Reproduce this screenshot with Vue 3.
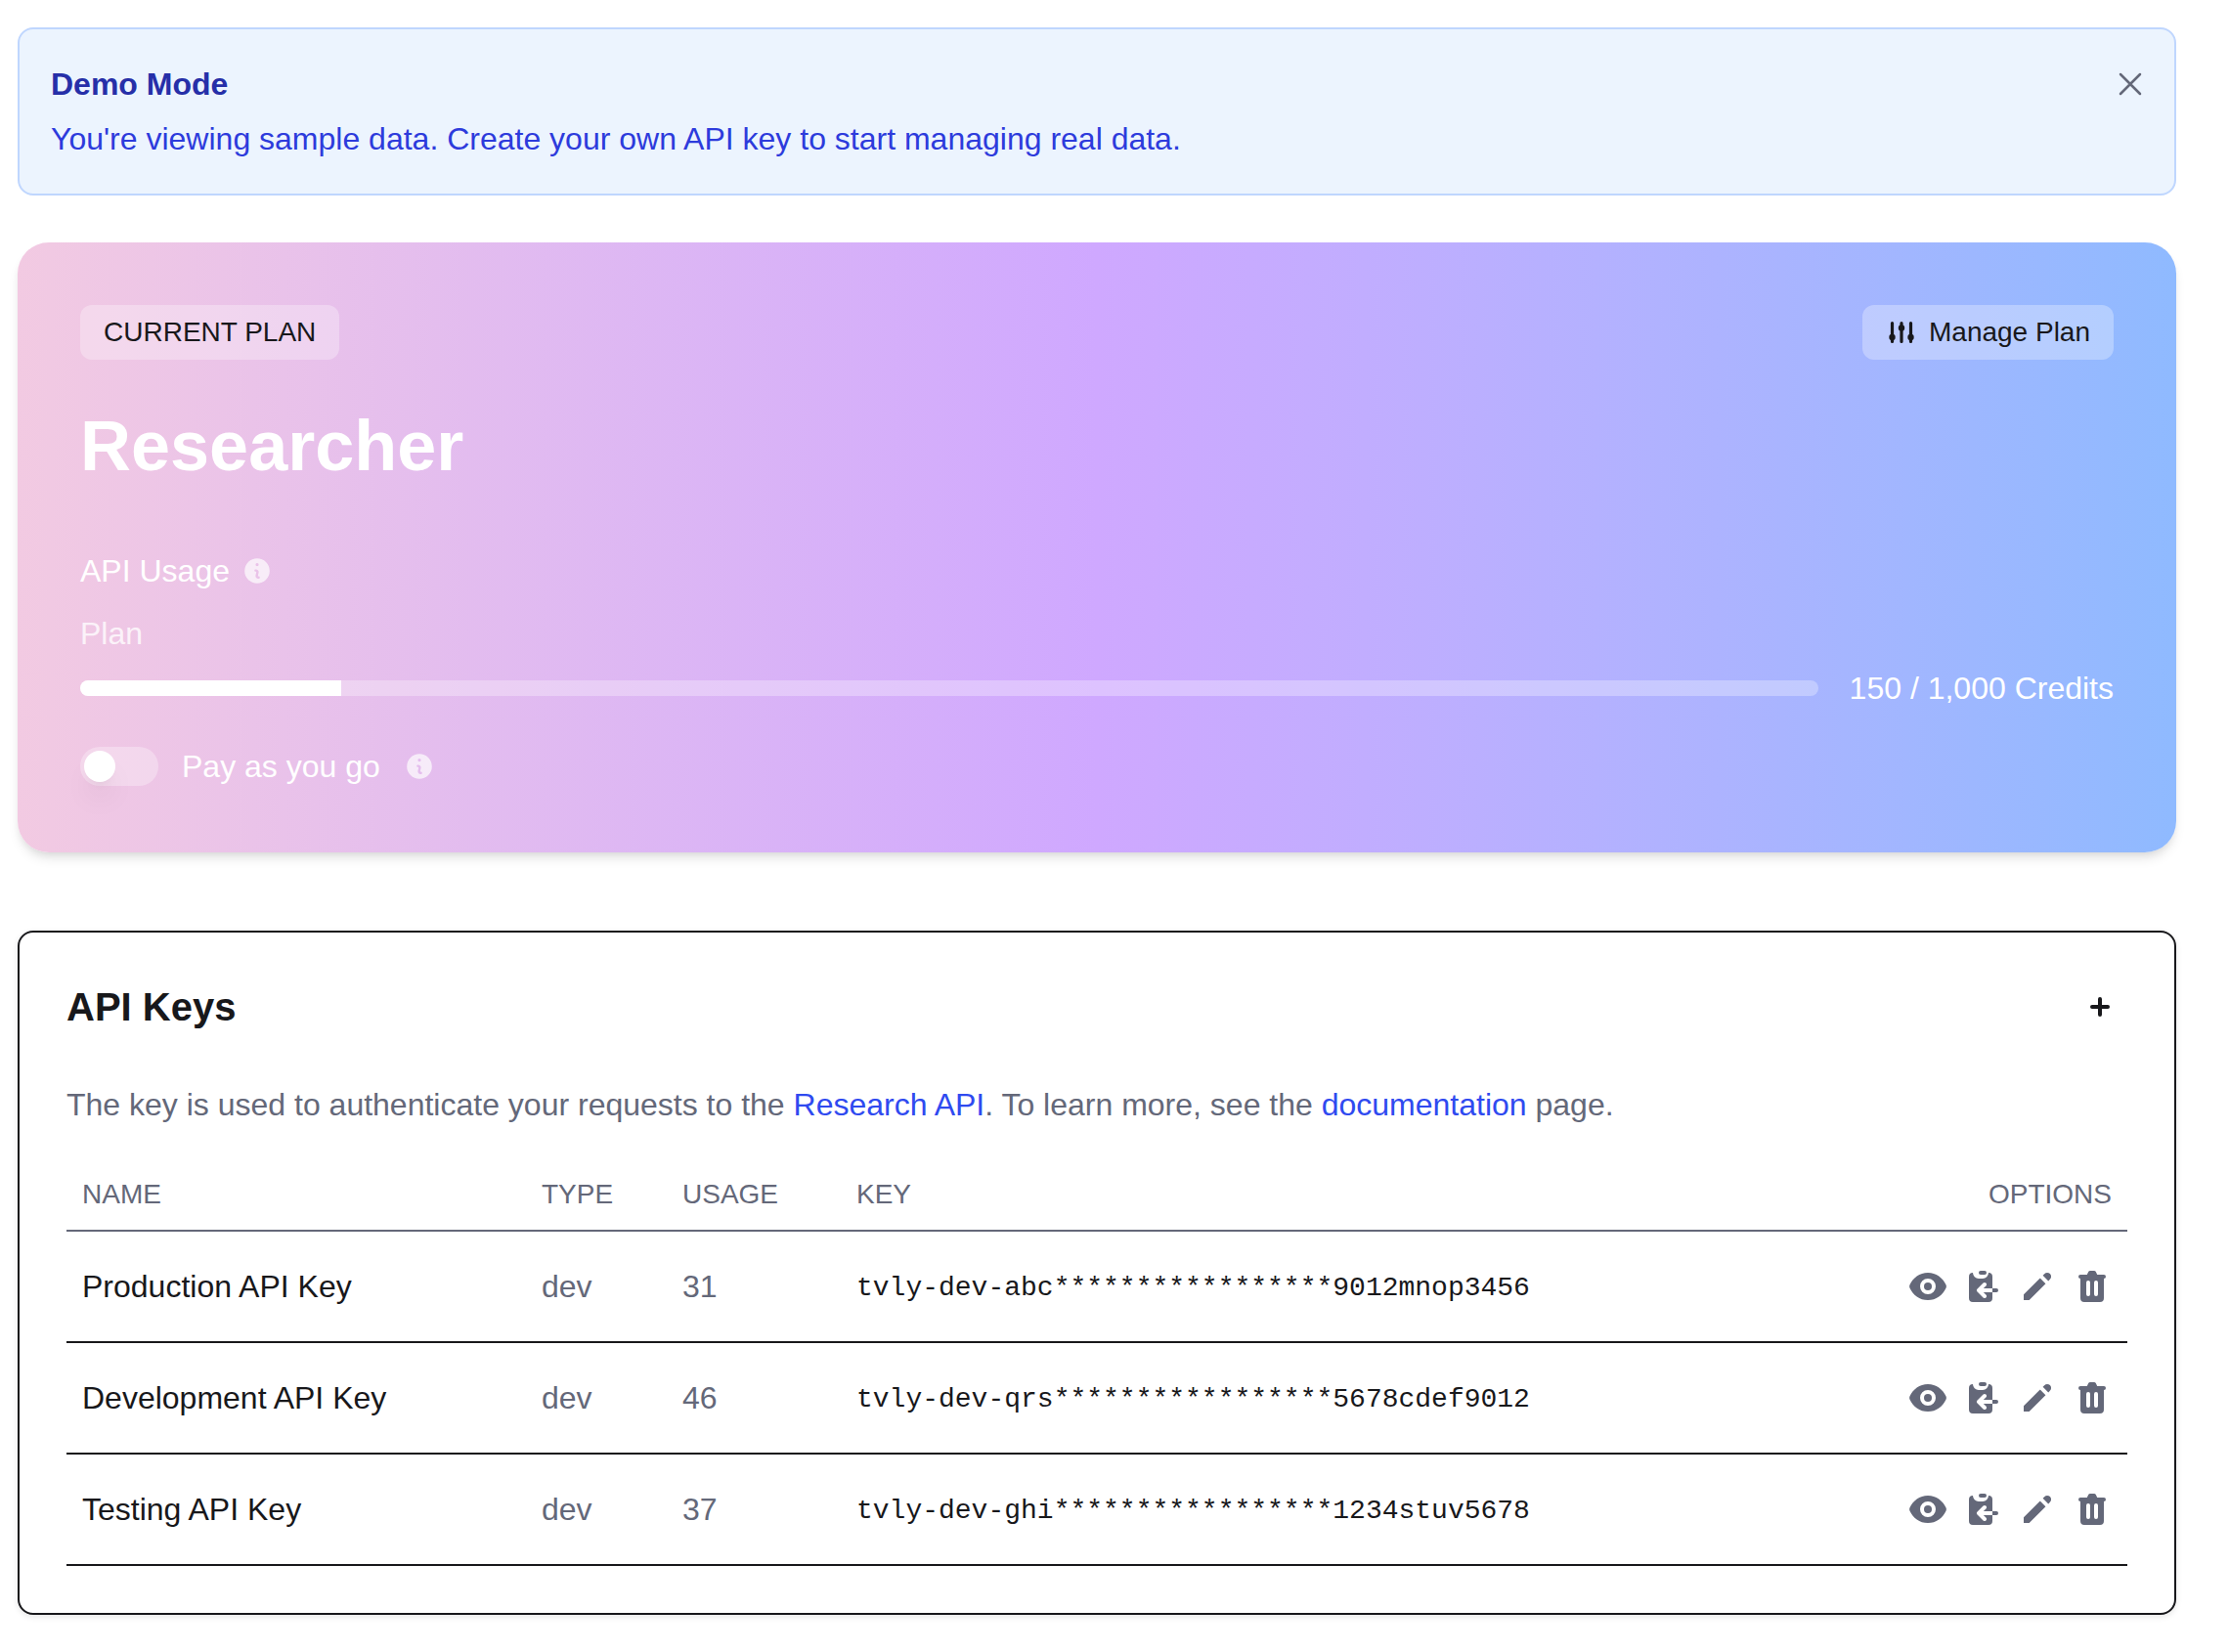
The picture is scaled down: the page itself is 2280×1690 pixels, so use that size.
<script setup>
import { ref } from 'vue'

const used = 150
const limit = 1000
const payAsYouGo = ref(false)

const keys = [
  { name: 'Production API Key', type: 'dev', usage: 31, key: 'tvly-dev-abc*****************9012mnop3456' },
  { name: 'Development API Key', type: 'dev', usage: 46, key: 'tvly-dev-qrs*****************5678cdef9012' },
  { name: 'Testing API Key', type: 'dev', usage: 37, key: 'tvly-dev-ghi*****************1234stuv5678' },
]

const infoPath =
  'M18 10a8 8 0 1 1-16 0 8 8 0 0 1 16 0Zm-7-4a1 1 0 1 1-2 0 1 1 0 0 1 2 0ZM9 9a.75.75 0 0 0 0 1.5h.253a.25.25 0 0 1 .244.304l-.459 2.066A1.75 1.75 0 0 0 10.747 15H11a.75.75 0 0 0 0-1.5h-.253a.25.25 0 0 1-.244-.304l.459-2.066A1.75 1.75 0 0 0 9.253 9H9Z'

const actions = [
  {
    label: 'Show key',
    paths: [
      'M10 3C5.8 3 2.3 5.7.7 9.3a1.7 1.7 0 0 0 0 1.4C2.3 14.3 5.8 17 10 17s7.7-2.7 9.3-6.3a1.7 1.7 0 0 0 0-1.4C17.7 5.7 14.2 3 10 3Zm0 11a4 4 0 1 1 0-8 4 4 0 0 1 0 8Z',
      'M12 10a2 2 0 1 1-4 0 2 2 0 0 1 4 0Z',
    ],
  },
  {
    label: 'Copy key',
    paths: [
      'M9 2h2a1 1 0 0 1 0 2H9a1 1 0 0 1 0-2Z',
      'M5 3A2 2 0 0 0 3 5v11a2 2 0 0 0 2 2h8a2 2 0 0 0 2-2v-3h-4.586l1.293 1.293a1 1 0 0 1-1.414 1.414l-3-3a1 1 0 0 1 0-1.414l3-3a1 1 0 0 1 1.414 1.414L10.414 11H15V5a2 2 0 0 0-2-2 3 3 0 0 1-3 3H8a3 3 0 0 1-3-3Z',
      'M15 11h2a1 1 0 1 1 0 2h-2v-2Z',
    ],
  },
  {
    label: 'Edit key',
    paths: ['M13.586 3.586a2 2 0 1 1 2.828 2.828l-.793.793-2.828-2.828.793-.793ZM11.379 5.793 3 14.172V17h2.828l8.38-8.379-2.83-2.828Z'],
  },
  {
    label: 'Delete key',
    paths: [
      'M9 2a1 1 0 0 0-.894.553L7.382 4H4a1 1 0 0 0 0 2v10a2 2 0 0 0 2 2h8a2 2 0 0 0 2-2V6a1 1 0 1 0 0-2h-3.382l-.724-1.447A1 1 0 0 0 11 2H9ZM7 8a1 1 0 0 1 2 0v6a1 1 0 1 1-2 0V8Zm5-1a1 1 0 0 0-1 1v6a1 1 0 1 0 2 0V8a1 1 0 0 0-1-1Z',
    ],
  },
]
</script>

<template>
  <main class="page">
    <section class="banner">
      <div class="banner-text">
        <h2>Demo Mode</h2>
        <p>You're viewing sample data. Create your own API key to start managing real data.</p>
      </div>
      <button class="close" type="button" aria-label="Dismiss">
        <svg class="icon" viewBox="0 0 24 24" fill="none" stroke="currentColor" stroke-width="1.5" stroke-linecap="round">
          <path d="M6 6l12 12M18 6L6 18" />
        </svg>
      </button>
    </section>

    <section class="plan">
      <div class="plan-top">
        <span class="badge">CURRENT PLAN</span>
        <button class="badge manage" type="button">
          <svg class="icon-small" viewBox="0 0 32 32" stroke="currentColor" fill="currentColor" stroke-width="3.2" stroke-linecap="round">
            <path d="M6.500 6.500v19M16 6.500v19M25.500 6.500v19" />
            <g stroke="none">
              <circle cx="6.500" cy="21" r="3.200" />
              <circle cx="16" cy="11.500" r="3.200" />
              <circle cx="25.500" cy="21" r="3.200" />
            </g>
          </svg>
          Manage Plan
        </button>
      </div>
      <h1>Researcher</h1>
      <div class="usage-title">
        <span>API Usage</span>
        <svg class="icon-small info" viewBox="0 0 20 20" fill="currentColor" fill-rule="evenodd"><path :d="infoPath" /></svg>
      </div>
      <p class="plan-label">Plan</p>
      <div class="meter-row">
        <div class="meter" role="progressbar" aria-label="Plan credits" :aria-valuenow="used" :aria-valuemax="limit">
          <div class="meter-fill" :style="{ width: (used / limit) * 100 + '%' }"></div>
        </div>
        <span>150 / 1,000 Credits</span>
      </div>
      <div class="payg">
        <input id="payg" v-model="payAsYouGo" class="switch" type="checkbox" role="switch" />
        <label for="payg">Pay as you go</label>
        <svg class="icon-small info" viewBox="0 0 20 20" fill="currentColor" fill-rule="evenodd"><path :d="infoPath" /></svg>
      </div>
    </section>

    <section class="keys">
      <header class="keys-head">
        <h2>API Keys</h2>
        <button class="add" type="button" aria-label="Add key">
          <svg class="icon" viewBox="0 0 20 20" fill="currentColor">
            <path d="M10 5a1 1 0 0 1 1 1v3h3a1 1 0 1 1 0 2h-3v3a1 1 0 1 1-2 0v-3H6a1 1 0 1 1 0-2h3V6a1 1 0 0 1 1-1Z" />
          </svg>
        </button>
      </header>
      <p class="intro">
        The key is used to authenticate your requests to the <a href="#research">Research API</a>. To learn more, see the
        <a href="#docs">documentation</a> page.
      </p>
      <table>
        <colgroup>
          <col class="col-name" />
          <col class="col-type" />
          <col class="col-usage" />
          <col />
          <col class="col-options" />
        </colgroup>
        <thead>
          <tr>
            <th scope="col">NAME</th>
            <th scope="col">TYPE</th>
            <th scope="col">USAGE</th>
            <th scope="col">KEY</th>
            <th scope="col" class="right">OPTIONS</th>
          </tr>
        </thead>
        <tbody>
          <tr v-for="row in keys" :key="row.name">
            <td>{{ row.name }}</td>
            <td class="muted">{{ row.type }}</td>
            <td class="muted">{{ row.usage }}</td>
            <td class="mono">{{ row.key }}</td>
            <td>
              <div class="options">
                <button v-for="action in actions" :key="action.label" type="button" :aria-label="action.label">
                  <svg class="icon" viewBox="0 0 20 20" fill="currentColor" fill-rule="evenodd">
                    <path v-for="d in action.paths" :key="d" :d="d" />
                  </svg>
                </button>
              </div>
            </td>
          </tr>
        </tbody>
      </table>
    </section>
  </main>
</template>

<style>
body {
  background: #fff;
}
</style>

<style scoped>
.page {
  display: flex;
  flex-direction: column;
  padding: 28px 54px 36px 18px;
  font-family: "Liberation Sans", Arial, sans-serif;
  font-size: 32px;
  line-height: 48px;
  color: #18181b;
}

h1,
h2,
p {
  margin: 0;
}

button {
  display: flex;
  align-items: center;
  justify-content: center;
  margin: 0;
  padding: 0;
  border: 0;
  background: none;
  color: inherit;
  font: inherit;
  cursor: pointer;
}

.icon {
  display: block;
  width: 40px;
  height: 40px;
}

.icon-small {
  display: block;
  flex: none;
  width: 32px;
  height: 32px;
}

.banner {
  display: flex;
  justify-content: space-between;
  align-items: flex-start;
  padding: 32px 25px 32px 32px;
  border: 2px solid #bfd6fe;
  border-radius: 16px;
  background: #ecf4fe;
}

.banner-text {
  display: flex;
  flex-direction: column;
  gap: 8px;
  color: #2d3bdc;
}

.banner h2 {
  font-size: 32px;
  color: #262fa8;
}

.close {
  height: 48px;
  color: #646879;
}

.plan {
  margin-top: 48px;
  padding: 64px;
  border-radius: 32px;
  background: linear-gradient(90deg in oklab, #f2cae2, #cfa8ff 50%, #8fbaff);
  box-shadow: 0 8px 12px -2px rgba(0, 0, 0, 0.1), 0 4px 8px -4px rgba(0, 0, 0, 0.1);
  color: #fff;
}

.plan-top {
  display: flex;
  justify-content: space-between;
}

.badge {
  padding: 8px 24px;
  border-radius: 12px;
  background: rgba(255, 255, 255, 0.3);
  font-size: 28px;
  line-height: 40px;
  color: #18181b;
}

.manage {
  gap: 12px;
}

h1 {
  margin-top: 48px;
  font-size: 72px;
  line-height: 80px;
}

.usage-title {
  display: flex;
  align-items: center;
  gap: 12px;
  margin-top: 64px;
}

.info {
  opacity: 0.7;
}

.plan-label {
  margin-top: 16px;
  color: rgba(255, 255, 255, 0.8);
}

.meter-row {
  display: flex;
  align-items: center;
  gap: 32px;
  margin-top: 8px;
}

.meter {
  flex: 1;
  height: 16px;
  overflow: hidden;
  border-radius: 8px;
  background: rgba(255, 255, 255, 0.3);
}

.meter-fill {
  height: 100%;
  background: #fff;
}

.payg {
  display: flex;
  align-items: center;
  gap: 24px;
  margin-top: 32px;
}

.switch {
  appearance: none;
  width: 80px;
  height: 40px;
  margin: 0;
  padding: 4px;
  box-sizing: border-box;
  border-radius: 20px;
  background: rgba(255, 255, 255, 0.3);
  cursor: pointer;
}

.switch::before {
  content: "";
  display: block;
  width: 32px;
  height: 32px;
  border-radius: 50%;
  background: #fff;
  box-shadow: 0 20px 30px -6px rgba(0, 0, 0, 0.1), 0 8px 12px -8px rgba(0, 0, 0, 0.1);
}

.switch:checked::before {
  margin-left: auto;
}

.keys {
  margin-top: 80px;
  padding: 48px;
  border: 2px solid #18181b;
  border-radius: 16px;
  background: #fff;
  box-shadow: 0 2px 6px rgba(0, 0, 0, 0.1);
}

.keys-head {
  display: flex;
  justify-content: space-between;
  align-items: center;
}

.keys-head h2 {
  font-size: 40px;
  line-height: 56px;
}

.add {
  width: 56px;
  height: 56px;
}

.intro {
  margin-top: 48px;
  color: #646879;
}

a {
  color: #2f4af0;
  text-decoration: none;
}

table {
  width: 100%;
  margin-top: 30px;
  border-collapse: separate;
  border-spacing: 0;
  table-layout: fixed;
}

.col-name {
  width: 470px;
}

.col-type {
  width: 144px;
}

.col-usage {
  width: 178px;
}

.col-options {
  width: 256px;
}

th {
  padding: 17px 16px 15px;
  border-bottom: 2px solid #646879;
  font-size: 28px;
  font-weight: 400;
  line-height: 42px;
  text-align: left;
  color: #646879;
}

th.right {
  text-align: right;
}

td {
  padding: 32px 16px;
  border-bottom: 2px solid #18181b;
  white-space: nowrap;
}

.muted {
  color: #646879;
}

td.mono {
  padding: 34px 16px 30px;
  font-family: "Liberation Mono", "Courier New", monospace;
  font-size: 28px;
}

.options {
  display: flex;
  justify-content: flex-end;
  gap: 16px;
  color: #646879;
}
</style>
